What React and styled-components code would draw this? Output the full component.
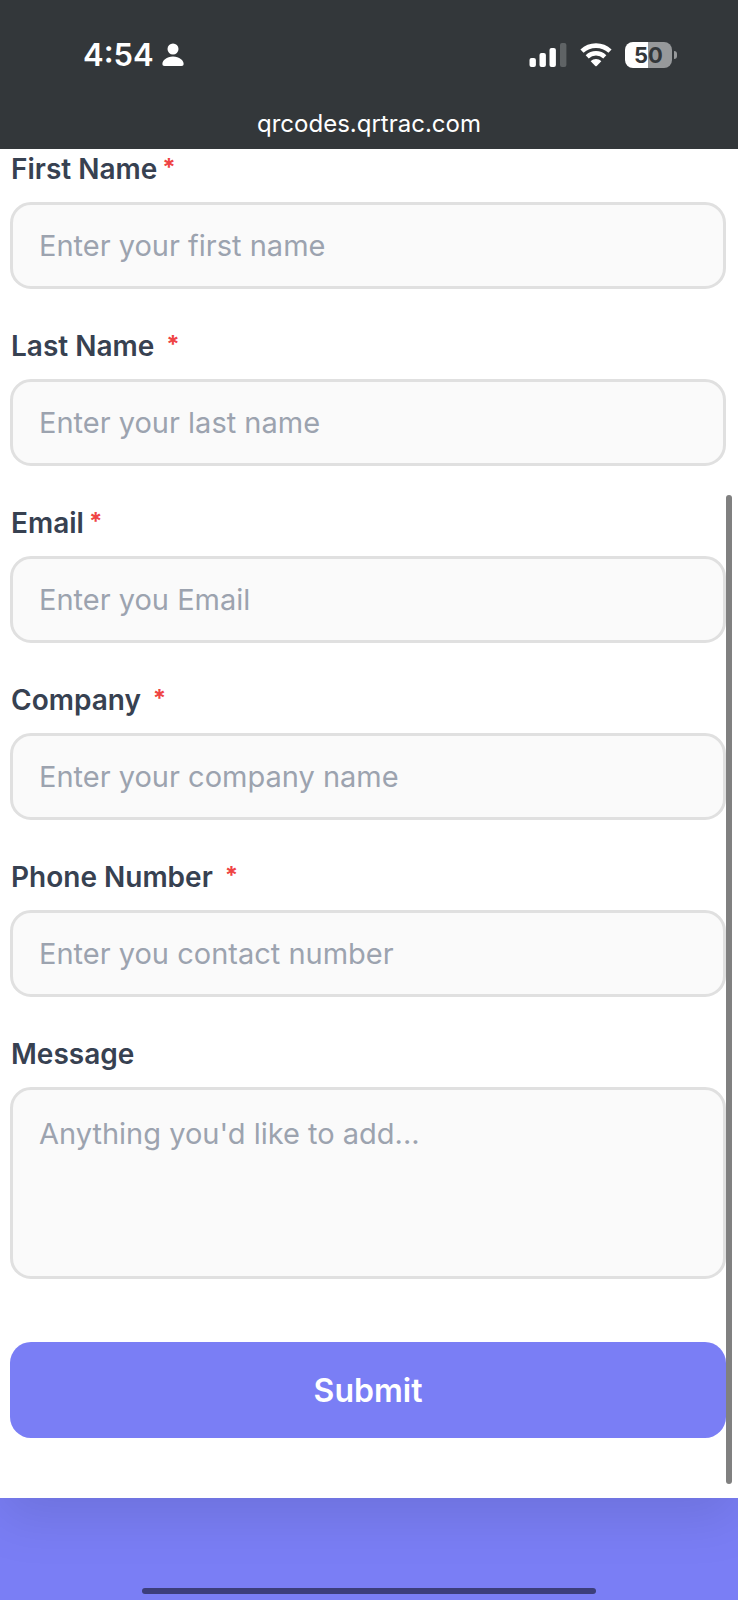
import React, { useState } from 'react'
import styled, { createGlobalStyle } from 'styled-components'

const GlobalStyle = createGlobalStyle`
  * {
    box-sizing: border-box;
  }

  body {
    margin: 0;
    background: #7a7ef5;
    font-family: Inter, 'Liberation Sans', sans-serif;
  }
`

const Page = styled.div`
  display: flex;
  flex-direction: column;
  min-height: 100vh;
  overflow: hidden;
`

const Header = styled.header`
  position: relative;
  z-index: 1;
  background: #33373a;
  color: #fff;
`

const StatusBar = styled.div`
  display: flex;
  align-items: center;
  justify-content: space-between;
  height: 110px;
  padding: 0 61px 0 83px;
`

const StatusGroup = styled.div`
  display: flex;
  align-items: center;
  gap: ${({ $gap }) => $gap}px;
`

const Time = styled.span`
  font-size: 31px;
  font-weight: 600;
  line-height: 36px;
`

const Battery = styled.div`
  display: flex;
  align-items: center;
  gap: 2px;

  &::after {
    content: '';
    width: 3px;
    height: 8px;
    border-radius: 0 4px 4px 0;
    background: #97999b;
  }
`

const BatteryLevel = styled.span`
  width: 47px;
  height: 26px;
  border-radius: 8px;
  background: linear-gradient(
    to right,
    #fff ${({ $level }) => $level}%,
    #97999b ${({ $level }) => $level}%
  );
  color: #33373a;
  font-size: 22px;
  font-weight: 700;
  line-height: 26px;
  text-align: center;
`

const Address = styled.div`
  height: 39px;
  font-size: 24px;
  line-height: 28px;
  text-align: center;
`

const Card = styled.main`
  padding: 3px 12px 60px 10px;
  background: #fff;
  box-shadow: 0 20px 50px rgba(0, 0, 0, 0.1);
`

const Form = styled.form`
  display: flex;
  flex-direction: column;
  gap: 40px;
`

const Field = styled.div`
  display: flex;
  flex-direction: column;
  gap: 16px;
`

const Label = styled.label`
  display: flex;
  padding-left: 1px;
  color: #374151;
  font-size: 28px;
  font-weight: 600;
  line-height: 34px;
`

const Required = styled.span`
  margin-left: ${({ $spaced }) => ($spaced ? 12 : 5)}px;
  color: #ef4444;
  font-size: 24px;
  font-weight: 700;
  line-height: 32px;
`

const Input = styled.input`
  display: block;
  width: 100%;
  height: 87px;
  padding: 0 26px;
  border: 3px solid #e0e0e0;
  border-radius: 21px;
  background: #fafafa;
  color: #374151;
  font-family: inherit;
  font-size: 29px;
  line-height: 36px;
  outline: none;

  &::placeholder {
    color: #9ca3af;
    opacity: 1;
  }

  &:focus {
    border-color: #7a7ef5;
  }
`

const TextArea = styled(Input)`
  height: 192px;
  padding: 26px;
  resize: none;
`

const SubmitButton = styled.button`
  height: 96px;
  margin-top: 23px;
  border: 0;
  border-radius: 21px;
  background: #7a7ef5;
  color: #fff;
  font-family: inherit;
  font-size: 32px;
  font-weight: 600;
  cursor: pointer;
`

const ScrollThumb = styled.div`
  position: fixed;
  top: 495px;
  right: 6px;
  bottom: 116px;
  z-index: 2;
  width: 6px;
  border-radius: 3px;
  background: #808080;
`

const HomeIndicator = styled.div`
  position: fixed;
  right: 142px;
  bottom: 6px;
  left: 142px;
  height: 6px;
  border-radius: 3px;
  background: #3c3e7b;
`

const fields = [
  { name: 'firstName', label: 'First Name', placeholder: 'Enter your first name' },
  { name: 'lastName', label: 'Last Name', placeholder: 'Enter your last name', spaced: true },
  { name: 'email', label: 'Email', placeholder: 'Enter you Email', type: 'email' },
  { name: 'company', label: 'Company', placeholder: 'Enter your company name', spaced: true },
  { name: 'phone', label: 'Phone Number', placeholder: 'Enter you contact number', type: 'tel', spaced: true }
]

const PersonIcon = () => (
  <svg width="22" height="24" viewBox="0 0 22 24" fill="#fff" aria-hidden="true">
    <circle cx="11" cy="6" r="5.5" />
    <path d="M2.6 23C1 23 .4 22.2 .4 20.8C.4 17.4 4.6 13.4 11 13.4S21.6 17.4 21.6 20.8C21.6 22.2 21 23 19.4 23Z" />
  </svg>
)

const SignalIcon = () => (
  <svg width="38" height="26" viewBox="0 0 38 26" fill="#fff" aria-hidden="true">
    <rect x="0.5" y="16" width="6.4" height="9" rx="2" />
    <rect x="10.5" y="11" width="6.4" height="14" rx="2" />
    <rect x="20.5" y="6" width="6.4" height="19" rx="2" />
    <rect x="31" y="1" width="6.4" height="24" rx="2" fill="#5f6365" />
  </svg>
)

const WifiIcon = () => (
  <svg width="32" height="26" viewBox="0 0 32 26" aria-hidden="true">
    <path d="M2 9.2C9.8 1.8 22.2 1.8 30 9.2" fill="none" stroke="#fff" strokeWidth="4.6" />
    <path d="M7.2 14.8C12.2 10 19.8 10 24.8 14.8" fill="none" stroke="#fff" strokeWidth="4.4" />
    <path d="M10.7 19.2C13.7 16.3 18.3 16.3 21.3 19.2L16.7 23.9Q16 24.6 15.3 23.9Z" fill="#fff" />
  </svg>
)

const App = () => {
  const [form, setForm] = useState({})

  const onInputChange = ({ target: { name, value } }) => {
    setForm({ ...form, [name]: value })
  }

  return (
    <Page>
      <GlobalStyle />
      <Header>
        <StatusBar>
          <StatusGroup $gap={8}>
            <Time>4:54</Time>
            <PersonIcon />
          </StatusGroup>
          <StatusGroup $gap={13}>
            <SignalIcon />
            <WifiIcon />
            <Battery>
              <BatteryLevel $level={50}>50</BatteryLevel>
            </Battery>
          </StatusGroup>
        </StatusBar>
        <Address>qrcodes.qrtrac.com</Address>
      </Header>
      <Card>
        <Form onSubmit={e => e.preventDefault()}>
          {fields.map(({ name, label, placeholder, type = 'text', spaced }) => (
            <Field key={name}>
              <Label htmlFor={name}>
                {label}
                <Required $spaced={spaced}>*</Required>
              </Label>
              <Input
                id={name}
                name={name}
                type={type}
                placeholder={placeholder}
                value={form[name] || ''}
                onChange={onInputChange}
                required
              />
            </Field>
          ))}
          <Field>
            <Label htmlFor="message">Message</Label>
            <TextArea
              as="textarea"
              id="message"
              name="message"
              placeholder="Anything you'd like to add..."
              value={form.message || ''}
              onChange={onInputChange}
            />
          </Field>
          <SubmitButton type="submit">Submit</SubmitButton>
        </Form>
      </Card>
      <ScrollThumb />
      <HomeIndicator />
    </Page>
  )
}

export default App
